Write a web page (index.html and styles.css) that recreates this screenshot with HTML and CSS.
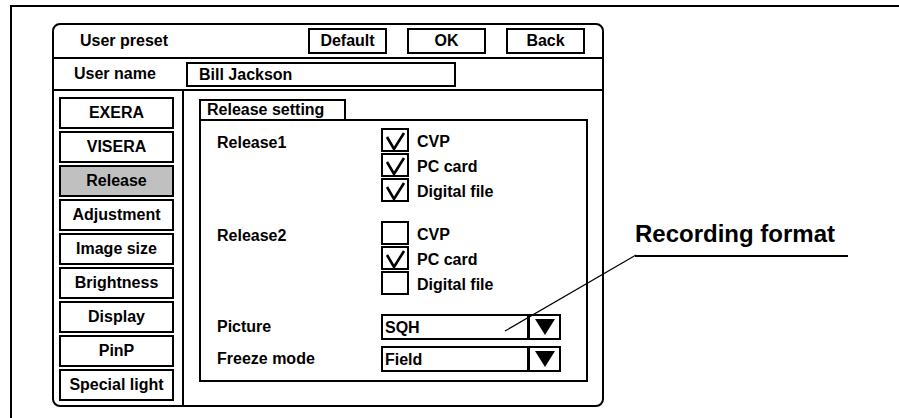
FILE: index.html
```html
<!DOCTYPE html>
<html>

<head>
    <!-- for styling -->
    <link rel="stylesheet" href="styles.css">
</head>

<body>
    <div class="sheet">
        <div class="panel">
            <!-- top bar -->
            <div class="panel-head">
                <div class="title">User preset</div>
                <div class="btn">Default</div>
                <div class="btn">OK</div>
                <div class="btn">Back</div>
            </div>
            <div class="name-row">
                <div class="name-label">User name</div>
                <div class="name-field">Bill Jackson</div>
            </div>

            <div class="main">
                <!-- menu column -->
                <div class="side">
                    <div class="menu-btn">EXERA</div>
                    <div class="menu-btn">VISERA</div>
                    <div class="menu-btn active">Release</div>
                    <div class="menu-btn">Adjustment</div>
                    <div class="menu-btn">Image size</div>
                    <div class="menu-btn">Brightness</div>
                    <div class="menu-btn">Display</div>
                    <div class="menu-btn">PinP</div>
                    <div class="menu-btn">Special light</div>
                </div>

                <div class="content">
                    <div class="tab">Release setting</div>
                    <div class="settings">
                        <div class="group">
                            <div class="label">Release1</div>
                            <div class="opts">
                                <div class="opt"><span class="box checked"></span><span class="opt-text">CVP</span></div>
                                <div class="opt"><span class="box checked"></span><span class="opt-text">PC card</span></div>
                                <div class="opt"><span class="box checked"></span><span class="opt-text">Digital file</span></div>
                            </div>
                        </div>
                        <div class="group">
                            <div class="label">Release2</div>
                            <div class="opts">
                                <div class="opt"><span class="box"></span><span class="opt-text">CVP</span></div>
                                <div class="opt"><span class="box checked"></span><span class="opt-text">PC card</span></div>
                                <div class="opt"><span class="box"></span><span class="opt-text">Digital file</span></div>
                            </div>
                        </div>
                        <div class="select-row first">
                            <div class="label">Picture</div>
                            <div class="select"><span class="select-val">SQH</span><span class="arrow"><i></i></span></div>
                        </div>
                        <div class="select-row">
                            <div class="label">Freeze mode</div>
                            <div class="select"><span class="select-val">Field</span><span class="arrow"><i></i></span></div>
                        </div>
                    </div>
                </div>
            </div>
        </div>
    </div>

    <!-- callout -->
    <div class="callout">Recording format</div>
    <svg class="leader" width="140" height="85">
        <line x1="5" y1="81" x2="136" y2="5" stroke="#000" stroke-width="1.2" />
    </svg>

    <script>
        // draw the tick into every checked box
        var boxes = document.querySelectorAll('.box.checked');
        for (var i = 0; i < boxes.length; i++) {
            boxes[i].innerHTML = '<svg width="24" height="20"><polyline points="4,7 11,19 21,3" fill="none" stroke="#000" stroke-width="2.6" /></svg>';
        }
    </script>
</body>

</html>
```

FILE: styles.css
```css
body {
    margin: 0;
    position: relative;
    font-family: "Liberation Sans", Arial, sans-serif;
    font-size: 16px;
    font-weight: bold;
    color: #000;
    background: #fff;
}

.sheet {
    margin: 5px 0 0 10px;
    height: 413px;
    box-sizing: border-box;
    border-top: 2px solid #000;
    border-left: 2px solid #000;
    padding: 16px 0 0 40px;
}

.panel {
    width: 552px;
    height: 384px;
    box-sizing: border-box;
    border: 2px solid #000;
    border-radius: 8px;
    display: flex;
    flex-direction: column;
}

.panel-head {
    height: 31px;
    border-bottom: 2px solid #000;
    display: flex;
    align-items: center;
    padding: 0 17px 1px 26px;
    gap: 20px;
}

.title {
    flex: 1;
}

.btn {
    width: 79px;
    height: 26px;
    box-sizing: border-box;
    border: 2px solid #000;
    display: flex;
    align-items: center;
    justify-content: center;
}

.name-row {
    height: 30px;
    border-bottom: 2px solid #000;
    display: flex;
    align-items: center;
    padding-left: 20px;
}

.name-label {
    width: 112px;
}

.name-field {
    width: 270px;
    height: 25px;
    box-sizing: border-box;
    border: 2px solid #000;
    padding-left: 11px;
    line-height: 21px;
}

.main {
    flex: 1;
    display: flex;
}

.side {
    width: 128px;
    border-right: 2px solid #000;
    padding: 6px 0 0 5px;
    display: flex;
    flex-direction: column;
    gap: 2px;
}

.menu-btn {
    width: 115px;
    height: 32px;
    box-sizing: border-box;
    border: 2px solid #000;
    display: flex;
    align-items: center;
    justify-content: center;
}

.menu-btn.active {
    background: #c0c0c0;
}

.content {
    flex: 1;
    padding: 8px 14px 0 15px;
}

.tab {
    width: 147px;
    height: 20px;
    box-sizing: border-box;
    border: 2px solid #000;
    border-bottom: none;
    padding-left: 6px;
    line-height: 18px;
}

.settings {
    width: 389px;
    height: 263px;
    box-sizing: border-box;
    border: 2px solid #000;
    padding: 7px 0 0 16px;
}

.group {
    display: flex;
    margin-bottom: 19px;
}

.label {
    width: 164px;
    line-height: 24px;
    padding-top: 3px;
}

.opts {
    display: flex;
    flex-direction: column;
    gap: 1px;
}

.opt {
    display: flex;
    align-items: center;
    height: 24px;
}

.box {
    width: 28px;
    height: 24px;
    box-sizing: border-box;
    border: 2px solid #000;
    margin-right: 8px;
}

.box svg {
    display: block;
}

.opt-text {
    padding-top: 3px;
}

.select-row {
    display: flex;
    align-items: center;
    margin-bottom: 6px;
}

.select-row .label {
    padding-top: 0;
}

.select {
    width: 180px;
    height: 26px;
    box-sizing: border-box;
    border: 2px solid #000;
    display: flex;
}

.select-val {
    flex: 1;
    padding-left: 2px;
    line-height: 23px;
}

.arrow {
    width: 29px;
    border-left: 3px solid #000;
    display: flex;
    align-items: center;
    justify-content: center;
}

.arrow i {
    width: 0;
    height: 0;
    border-left: 10px solid transparent;
    border-right: 10px solid transparent;
    border-top: 16px solid #000;
}

.callout {
    position: absolute;
    left: 635px;
    top: 220px;
    width: 213px;
    font-size: 24px;
    line-height: 28px;
    padding-bottom: 7px;
    border-bottom: 2px solid #000;
}

.leader {
    position: absolute;
    left: 500px;
    top: 250px;
}
```
